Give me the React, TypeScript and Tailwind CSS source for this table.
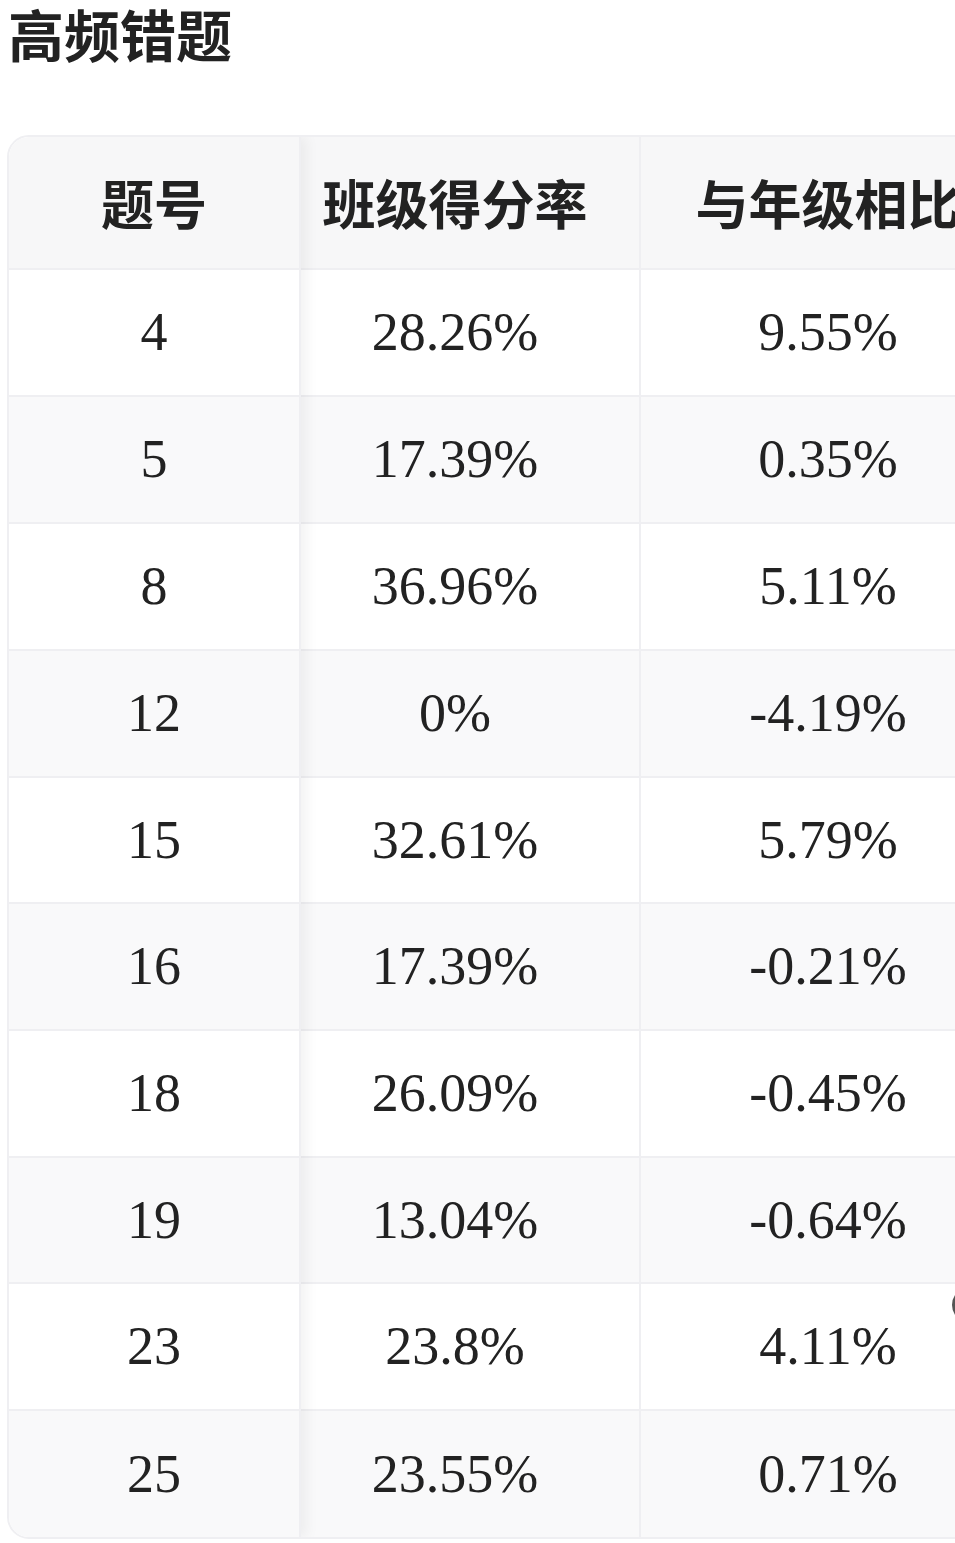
import React from "react";

const rows = [
  { q: "4", a: "28.26%", b: "9.55%", h: "h-[127px]" },
  { q: "5", a: "17.39%", b: "0.35%", h: "h-[127px]" },
  { q: "8", a: "36.96%", b: "5.11%", h: "h-[127px]" },
  { q: "12", a: "0%", b: "-4.19%", h: "h-[127px]" },
  { q: "15", a: "32.61%", b: "5.79%", h: "h-[126px]" },
  { q: "16", a: "17.39%", b: "-0.21%", h: "h-[127px]" },
  { q: "18", a: "26.09%", b: "-0.45%", h: "h-[127px]" },
  { q: "19", a: "13.04%", b: "-0.64%", h: "h-[126px]" },
  { q: "23", a: "23.8%", b: "4.11%", h: "h-[127px]" },
  { q: "25", a: "23.55%", b: "0.71%", h: "h-[126px]" },
];

const sans = "font-['Noto_Sans_CJK_SC','Noto_Sans',sans-serif]";
const serif = "font-['Liberation_Serif','Times_New_Roman',serif]";

export default function App() {
  return (
    <div className="relative w-[955px] h-[1543px] overflow-hidden bg-white text-[#222]">
      <div className="h-[135px] pt-[2px]">
        <h1 className={`${sans} font-bold text-[56px] leading-[1.1] pl-[8px]`}>
          高频错题
        </h1>
      </div>
      <div className="ml-[7px] w-[1010px] border-2 border-[#efeff2] rounded-l-[22px] overflow-hidden flex">
        {/* sticky first column */}
        <div className="relative z-10 w-[292px] shrink-0 flex flex-col border-r-2 border-[#efeff2] shadow-[6px_0_12px_rgba(0,0,0,0.05)]">
          <div className={`${sans} h-[133px] border-b-2 border-[#efeff2] bg-[#f7f7f8] flex items-center justify-center font-bold text-[53px]`}>
            题号
          </div>
          {rows.map((r, i) => (
            <div
              key={r.q}
              className={`${serif} ${r.h} ${i === rows.length - 1 ? "" : "border-b-2"} border-[#efeff2] ${i % 2 === 1 ? "bg-[#f9f9fa]" : "bg-white"} flex items-center justify-center text-[54px]`}
            >
              {r.q}
            </div>
          ))}
        </div>
        <div className="flex-1 flex flex-col">
          <div className="h-[133px] border-b-2 border-[#efeff2] bg-[#f7f7f8] flex">
            <div className={`${sans} w-[340px] pr-[30px] border-r-2 border-[#efeff2] flex items-center justify-center font-bold text-[53px]`}>
              班级得分率
            </div>
            <div className={`${sans} flex-1 flex items-center justify-center font-bold text-[53px] whitespace-nowrap`}>
              与年级相比
            </div>
          </div>
          {rows.map((r, i) => (
            <div
              key={r.q}
              className={`${r.h} ${i === rows.length - 1 ? "" : "border-b-2"} border-[#efeff2] ${i % 2 === 1 ? "bg-[#f9f9fa]" : "bg-white"} flex`}
            >
              <div className={`${serif} w-[340px] pr-[30px] border-r-2 border-[#efeff2] flex items-center justify-center text-[54px]`}>
                {r.a}
              </div>
              <div className={`${serif} flex-1 flex items-center justify-center text-[54px]`}>
                {r.b}
              </div>
            </div>
          ))}
        </div>
      </div>
      <div className="absolute left-[952px] top-[1287px] w-[36px] h-[36px] rounded-full border-[3px] border-[#555] bg-white" />
    </div>
  );
}
